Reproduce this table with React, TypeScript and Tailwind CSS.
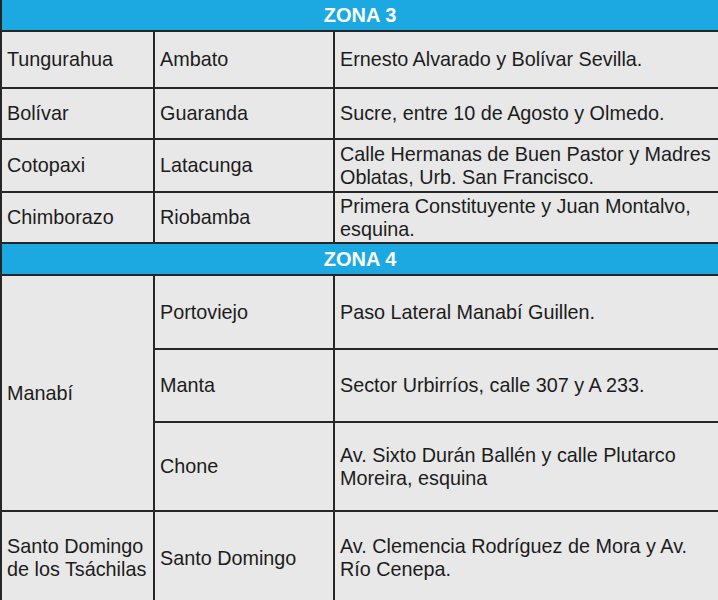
import React from "react";

const Cell = ({ children, className = "" }: { children: React.ReactNode; className?: string }) => (
  <div className={`bg-[#e8e8e8] flex items-center px-[5px] text-[#1c1c1c] ${className}`}>
    <div>{children}</div>
  </div>
);

const Zone = ({ label }: { label: string }) => (
  <div className="col-span-3 bg-[#1ca9e1] flex items-center justify-center text-white font-bold text-[20px]">
    {label}
  </div>
);

export default function App() {
  return (
    <div
      className="w-[718px] h-[600px] overflow-hidden bg-white"
      style={{ fontFamily: '"Liberation Sans", Arial, sans-serif' }}
    >
      <div className="w-[720px] bg-[#262626] pl-[2px] pr-[2px] grid grid-cols-[151px_178px_383px] grid-rows-[30px_55px_49px_51px_49px_30px_72px_71px_87px_92px] gap-[2px] text-[19.8px] leading-[23px]">
        <Zone label="ZONA 3" />
        <Cell>Tungurahua</Cell>
        <Cell>Ambato</Cell>
        <Cell>Ernesto Alvarado y Bolívar Sevilla.</Cell>

        <Cell>Bolívar</Cell>
        <Cell>Guaranda</Cell>
        <Cell>Sucre, entre 10 de Agosto y Olmedo.</Cell>

        <Cell>Cotopaxi</Cell>
        <Cell>Latacunga</Cell>
        <Cell>
          Calle Hermanas de Buen Pastor y Madres
          <br />
          Oblatas, Urb. San Francisco.
        </Cell>

        <Cell>Chimborazo</Cell>
        <Cell>Riobamba</Cell>
        <Cell>
          Primera Constituyente y Juan Montalvo,
          <br />
          esquina.
        </Cell>

        <Zone label="ZONA 4" />
        <Cell className="row-span-3">Manabí</Cell>
        <Cell>Portoviejo</Cell>
        <Cell>Paso Lateral Manabí Guillen.</Cell>

        <Cell>Manta</Cell>
        <Cell>Sector Urbirríos, calle 307 y A 233.</Cell>

        <Cell>Chone</Cell>
        <Cell>
          Av. Sixto Durán Ballén y calle Plutarco
          <br />
          Moreira, esquina
        </Cell>

        <Cell>
          Santo Domingo
          <br />
          de los Tsáchilas
        </Cell>
        <Cell>Santo Domingo</Cell>
        <Cell>
          Av. Clemencia Rodríguez de Mora y Av.
          <br />
          Río Cenepa.
        </Cell>
      </div>
    </div>
  );
}
